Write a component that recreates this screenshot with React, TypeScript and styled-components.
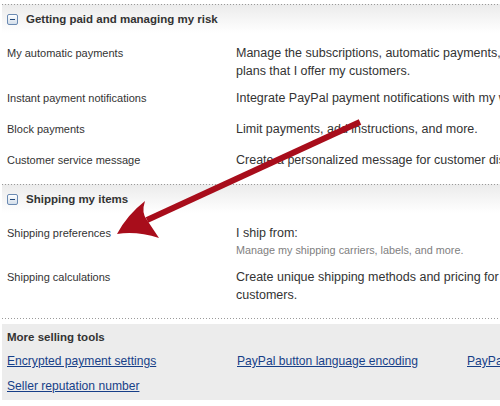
import React from "react";
import styled, { createGlobalStyle } from "styled-components";

const GlobalStyle = createGlobalStyle`
  html, body {
    margin: 0;
    padding: 0;
    background: #ffffff;
    overflow: hidden;
  }
  body {
    font-family: "Liberation Sans", Arial, sans-serif;
    color: #333333;
  }
`;

const dotted = `linear-gradient(to right, #9a9a9a 1px, transparent 1px) top left / 3px 1px repeat-x`;

const Page = styled.div`
  position: relative;
  width: 640px;
  padding: 4px 0 0 2px;
`;

const Section = styled.section``;

const SectionHeader = styled.h2`
  display: flex;
  align-items: flex-start;
  margin: 0;
  padding: 6px 5px 5px;
  background: ${dotted}, linear-gradient(#ebebeb, #ffffff) top left / 100% 100% no-repeat;
  font-size: 11.5px;
  font-weight: bold;
  line-height: 18px;
  color: #333333;
`;

const Toggle = styled.span`
  position: relative;
  box-sizing: border-box;
  width: 11px;
  height: 11px;
  margin: 4px 8px 0 0;
  border: 1px solid #6b8ab2;
  border-radius: 2px;
  background: linear-gradient(#ffffff, #d3deea);
  flex: none;
  &::after {
    content: "";
    position: absolute;
    left: 2px;
    top: 4px;
    width: 5px;
    height: 1px;
    background: #24497a;
  }
`;

const Rows = styled.div`
  padding: 7px 5px 6px;
`;

const Row = styled.div`
  display: grid;
  grid-template-columns: 229px 365px;
  box-sizing: border-box;
  min-height: 31px;
  padding: 4px 0 5px;
`;

const Label = styled.div`
  font-size: 11px;
  line-height: 18px;
  color: #333333;
`;

const Desc = styled.div`
  font-size: 12.5px;
  line-height: 18px;
  color: #333333;
`;

const Note = styled.div`
  font-size: 10.8px;
  line-height: 17px;
  color: #808080;
`;

const Footer = styled.div`
  margin-top: 3px;
  padding-top: 6px;
  background: ${dotted};
`;

const Tools = styled.div`
  background: #ececec;
  padding: 4px 5px 5px;
`;

const ToolsTitle = styled.h3`
  margin: 0;
  font-size: 11.5px;
  font-weight: bold;
  line-height: 18px;
  color: #333333;
`;

const LinkGrid = styled.div`
  display: grid;
  grid-template-columns: repeat(3, 230px);
  row-gap: 7px;
  margin-top: 6px;
`;

const ToolLink = styled.a`
  font-size: 12.1px;
  line-height: 18px;
  color: #173f88;
  text-decoration: underline;
  white-space: nowrap;
`;

const ArrowLayer = styled.svg`
  position: absolute;
  top: 0;
  left: 0;
  pointer-events: none;
`;

type Item = { label: string; desc: string; note?: string };

const paid: Item[] = [
  {
    label: "My automatic payments",
    desc: "Manage the subscriptions, automatic payments, and installment plans that I offer my customers.",
  },
  { label: "Instant payment notifications", desc: "Integrate PayPal payment notifications with my website." },
  { label: "Block payments", desc: "Limit payments, add instructions, and more." },
  { label: "Customer service message", desc: "Create a personalized message for customer disputes." },
];

const shipping: Item[] = [
  {
    label: "Shipping preferences",
    desc: "I ship from:",
    note: "Manage my shipping carriers, labels, and more.",
  },
  {
    label: "Shipping calculations",
    desc: "Create unique shipping methods and pricing for my international customers.",
  },
];

const links = [
  "Encrypted payment settings",
  "PayPal button language encoding",
  "PayPal button settings",
  "Seller reputation number",
];

function Block({ title, items }: { title: string; items: Item[] }) {
  return (
    <Section>
      <SectionHeader>
        <Toggle />
        {title}
      </SectionHeader>
      <Rows>
        {items.map((it) => (
          <Row key={it.label}>
            <Label>{it.label}</Label>
            <div>
              <Desc>{it.desc}</Desc>
              {it.note && <Note>{it.note}</Note>}
            </div>
          </Row>
        ))}
      </Rows>
    </Section>
  );
}

export default function App() {
  return (
    <>
      <GlobalStyle />
      <Page>
        <Block title="Getting paid and managing my risk" items={paid} />
        <Block title="Shipping my items" items={shipping} />
        <Footer>
          <Tools>
            <ToolsTitle>More selling tools</ToolsTitle>
            <LinkGrid>
              {links.map((l) => (
                <ToolLink key={l} href="#">
                  {l}
                </ToolLink>
              ))}
            </LinkGrid>
          </Tools>
        </Footer>
        <ArrowLayer width="500" height="406" viewBox="0 0 500 406">
          <line x1="360" y1="122" x2="147" y2="220" stroke="#a80d1b" strokeWidth="6" />
          <path
            d="M117,234 Q127,215 145,201 Q141,213 147,220 Q153,229 159,238 Q137,231 117,234 Z"
            fill="#a80d1b"
          />
        </ArrowLayer>
      </Page>
    </>
  );
}
